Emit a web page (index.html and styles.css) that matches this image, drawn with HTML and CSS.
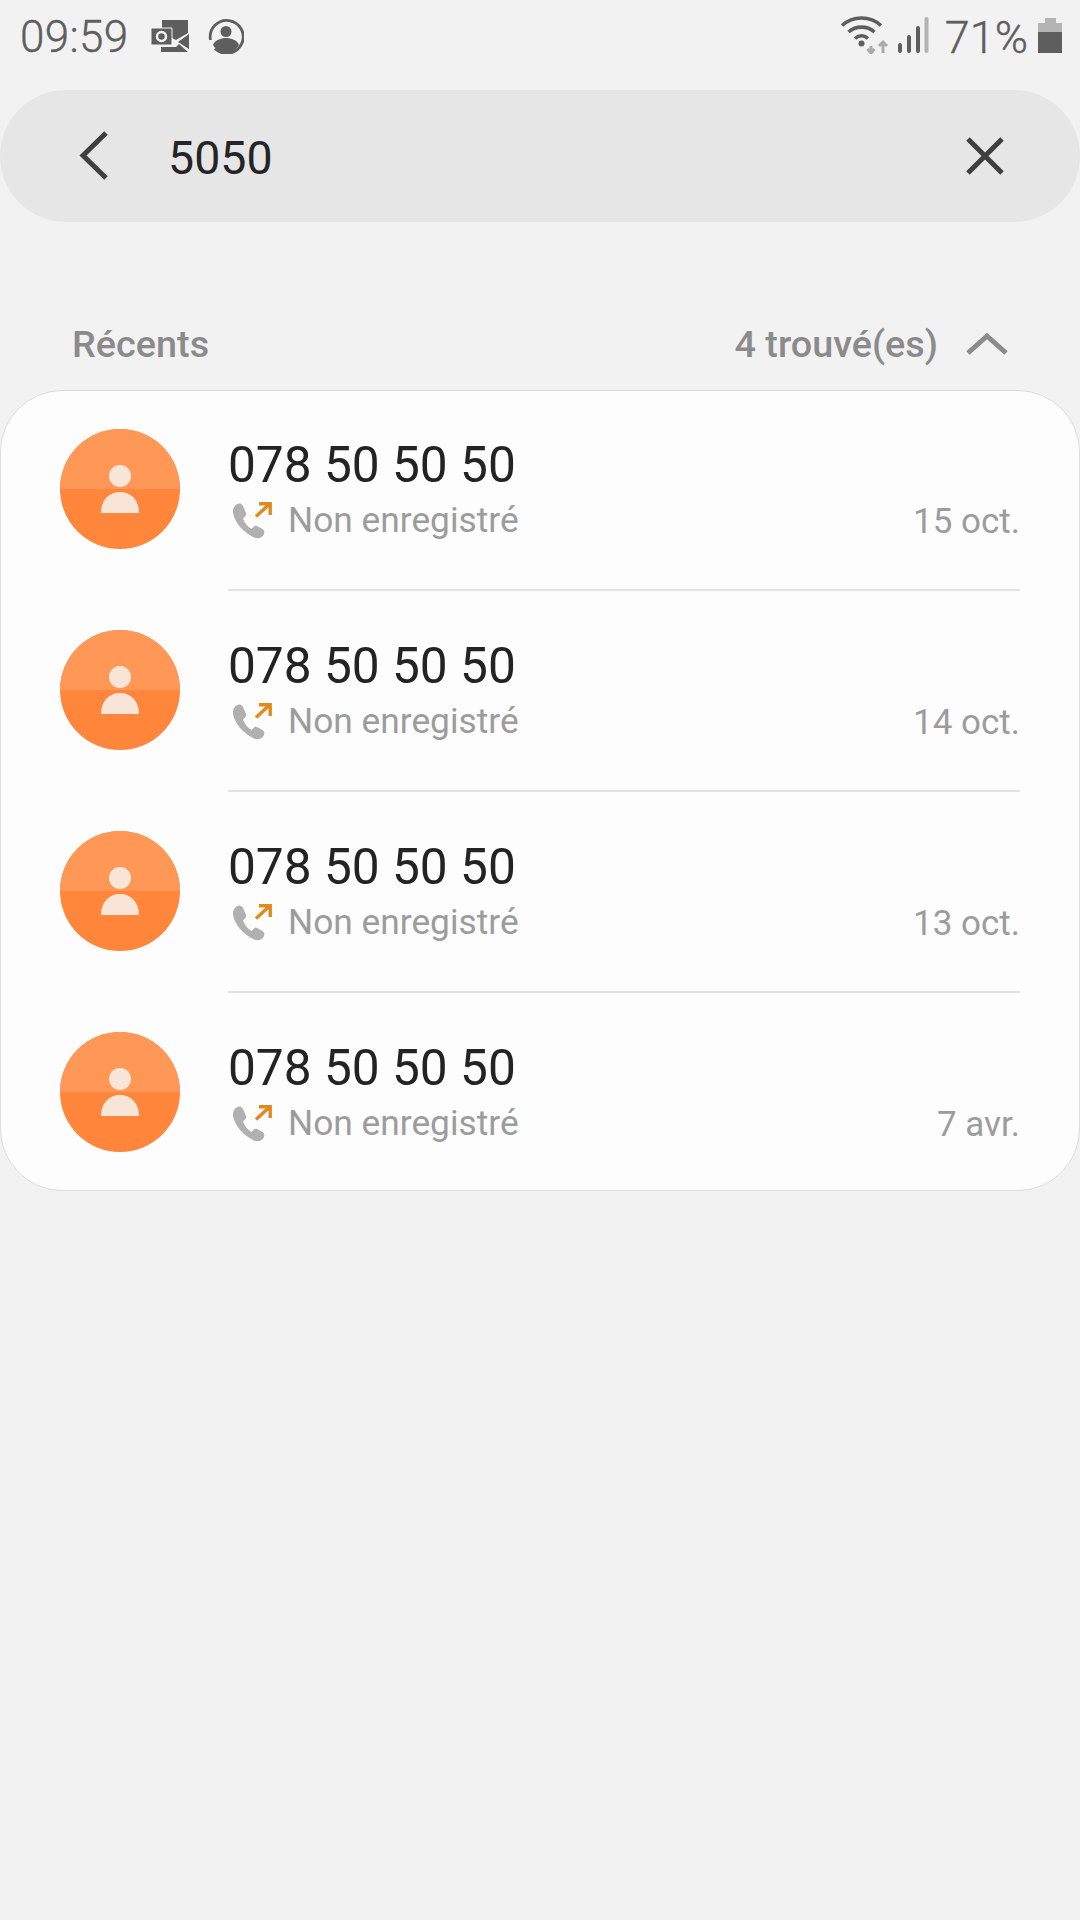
FILE: index.html
```html
<!DOCTYPE html>
<html lang="fr">
<head>
<meta charset="utf-8">
<title>Recherche</title>
<link rel="stylesheet" href="styles.css">
</head>
<body>
<svg class="defs" width="0" height="0" aria-hidden="true">
  <symbol id="avatar" viewBox="0 0 120 120">
    <circle cx="60" cy="60" r="60" fill="#ff863b"/>
    <path d="M0 60a60 60 0 0 1 120 0z" fill="#ff9857"/>
    <circle cx="60" cy="47" r="11" fill="#f9e4d8"/>
    <path d="M41 84c0-13 8-21 19-21s19 8 19 21z" fill="#f9e4d8"/>
  </symbol>
  <symbol id="call" viewBox="0 0 40 37">
    <path d="M7 1.500C3 2.500.5 6 1 11c2 10 10 19 21 24.500 4 1.500 8 .5 9.500-2.500 1.500-3 1-4.500-1-6L25 24c-1.500-.8-2.500-.2-3.500 1l-2 2c-3.500-2-7-6-8.500-10.500l2-2c1.300-1.200 1.500-2.500.8-4L11 4c-1-2-2.500-2.800-4-2.500z" fill="#b0b0b0"/>
    <path d="M24 14.500 37 2.500M27 1.800h11.200V13" fill="none" stroke="#e08a1e" stroke-width="3.400"/>
  </symbol>
</svg>
<div class="page">
  <header class="status">
    <div class="status-left">
      <span class="clock">09:59</span>
      <svg class="ic-outlook" viewBox="0 0 40 34"><path d="M12 1h26v13L26 21 12 14z" fill="#5e5e5e"/><path d="M1 9h21v17H1z" fill="#5e5e5e" stroke="#f2f2f2" stroke-width="1"/><circle cx="11.500" cy="17.500" r="4.500" fill="none" stroke="#f2f2f2" stroke-width="2.500"/><path d="M39 15v15L28 23zM11 28h15l3-3 9 8H11z" fill="#5e5e5e"/></svg>
      <svg class="ic-profile" viewBox="0 0 36 36"><path d="M2.500 22A16.500 16.500 0 1 1 7 30.500" fill="none" stroke="#5e5e5e" stroke-width="2.800"/><circle cx="18" cy="13.500" r="5.500" fill="#5e5e5e"/><path d="M5 27c2-5 8-7 13-7s11 2 13 7c-3 5-8 8-13 8S8 32 5 27z" fill="#5e5e5e"/></svg>
    </div>
    <div class="status-right">
      <svg class="ic-wifi" viewBox="0 0 50 38"><g fill="none" stroke="#5e5e5e" stroke-width="3.600"><path d="M2 9.500C13-.5 30-.5 41 9.500"/><path d="M8.500 16c7.500-6.500 18.500-6.500 26 0"/><path d="M15 22.500c4-3.500 9-3.500 13 0"/></g><circle cx="21.500" cy="27.500" r="3" fill="#5e5e5e"/><path d="M31 30v7M27.500 33l3.500 4 3.500-4M43 37V26M39 30l4-4 4 4" fill="none" stroke="#aaaaaa" stroke-width="3"/></svg>
      <svg class="ic-signal" viewBox="0 0 32 36"><g fill="none" stroke-width="4" stroke-linecap="round"><path d="M3 28v6M12 20v14M21 11v23" stroke="#5e5e5e"/><path d="M29.500 2v32" stroke="#b4b4b4"/></g></svg>
      <span class="battery-pct">71%</span>
      <div class="battery"><span class="battery-cap"></span><span class="battery-body"><span class="battery-fill"></span></span></div>
    </div>
  </header>

  <div class="search">
    <svg class="ic-back" viewBox="0 0 30 50"><path d="M27 2 4 24.500 27 47" fill="none" stroke="#3f3f3f" stroke-width="5"/></svg>
    <span class="query">5050</span>
    <svg class="ic-close" viewBox="0 0 38 38"><path d="M2 2l34 34M36 2 2 36" fill="none" stroke="#3f3f3f" stroke-width="5"/></svg>
  </div>

  <div class="section-head">
    <span>Récents</span>
    <div class="section-right">
      <span>4 trouvé(es)</span>
      <svg class="ic-up" viewBox="0 0 42 24"><path d="M2 21 21 4l19 17" fill="none" stroke="#8b8b8b" stroke-width="5"/></svg>
    </div>
  </div>

  <section class="card">
    <article class="row">
      <svg class="avatar"><use href="#avatar"/></svg>
      <div class="row-main">
        <div class="number">078 50 50 50</div>
        <div class="meta">
          <svg class="ic-call"><use href="#call"/></svg>
          <span class="label">Non enregistré</span>
          <span class="date">15 oct.</span>
        </div>
      </div>
    </article>
    <article class="row">
      <svg class="avatar"><use href="#avatar"/></svg>
      <div class="row-main">
        <div class="number">078 50 50 50</div>
        <div class="meta">
          <svg class="ic-call"><use href="#call"/></svg>
          <span class="label">Non enregistré</span>
          <span class="date">14 oct.</span>
        </div>
      </div>
    </article>
    <article class="row">
      <svg class="avatar"><use href="#avatar"/></svg>
      <div class="row-main">
        <div class="number">078 50 50 50</div>
        <div class="meta">
          <svg class="ic-call"><use href="#call"/></svg>
          <span class="label">Non enregistré</span>
          <span class="date">13 oct.</span>
        </div>
      </div>
    </article>
    <article class="row">
      <svg class="avatar"><use href="#avatar"/></svg>
      <div class="row-main">
        <div class="number">078 50 50 50</div>
        <div class="meta">
          <svg class="ic-call"><use href="#call"/></svg>
          <span class="label">Non enregistré</span>
          <span class="date">7 avr.</span>
        </div>
      </div>
    </article>
  </section>
</div>
</body>
</html>
```
FILE: styles.css
```css
* { box-sizing: border-box; }
html, body { margin: 0; padding: 0; }
body { background: #f2f2f2; font-family: Roboto, "Noto Sans", sans-serif; }
.defs { position: absolute; }
.page { width: 1080px; height: 1920px; display: flex; flex-direction: column; }

.status { height: 74px; padding: 0 18px 0 20px; display: flex; justify-content: space-between; align-items: center; color: #5e5e5e; }
.status-left, .status-right { display: flex; align-items: center; }
.clock { font-size: 44px; font-weight: 300; letter-spacing: 0.3px; -webkit-text-stroke: 0.4px #5e5e5e; }
.ic-outlook { width: 40px; height: 34px; margin: 0 0 3px 22px; }
.ic-profile { width: 36px; height: 36px; margin: 0 0 3px 18px; }
.ic-wifi { width: 50px; height: 38px; margin-bottom: 4px; }
.ic-signal { width: 32px; height: 36px; margin: 0 0 4px 7px; }
.battery-pct { font-size: 45px; font-weight: 300; margin-left: 16px; -webkit-text-stroke: 0.4px #5e5e5e; }
.battery { width: 24px; height: 35px; margin: 0 0 3px 10px; display: flex; flex-direction: column; align-items: center; }
.battery-cap { width: 11px; height: 5px; background: #b4b4b4; }
.battery-body { width: 24px; height: 30px; background: #b4b4b4; display: flex; align-items: flex-end; }
.battery-fill { width: 100%; height: 21px; background: #5e5e5e; }

.search { margin-top: 16px; height: 132px; border-radius: 66px; background: #e6e6e6; display: flex; align-items: center; padding: 0 76px 0 79px; }
.ic-back { width: 30px; height: 50px; }
.query { font-size: 46.500px; color: #252525; margin-left: 59px; padding-top: 3px; flex: 1; }
.ic-close { width: 38px; height: 38px; }

.section-head { margin-top: 103px; height: 38px; padding: 0 72px; display: flex; justify-content: space-between; align-items: center; font-size: 37.800px; font-weight: 500; color: #8b8b8b; }
.section-right { display: flex; align-items: center; gap: 28px; }
.ic-up { width: 42px; height: 24px; }

.card { margin-top: 27px; height: 801px; background: #fdfdfd; border: 1px solid #dcdcdc; border-radius: 62px; padding: 0 59px; }
.row { height: 201px; display: flex; align-items: flex-start; padding-top: 38px; }
.row:last-child { height: 198px; }
.avatar { width: 120px; height: 120px; flex: none; }
.row-main { flex: 1; margin-left: 48px; height: 162px; padding-top: 7px; border-bottom: 2px solid #e2e2e2; }
.row:last-child .row-main { border-bottom: 0; }
.number { font-size: 49.600px; line-height: 58px; color: #232323; }
.meta { display: flex; align-items: center; margin-top: 1px; height: 50px; }
.ic-call { width: 40px; height: 37px; margin-left: 4px; }
.label { font-size: 35.300px; color: #9c9c9c; margin-left: 16px; flex: 1; }
.date { font-size: 35px; color: #9c9c9c; align-self: flex-end; line-height: 50px; margin-bottom: -2px; }
```
